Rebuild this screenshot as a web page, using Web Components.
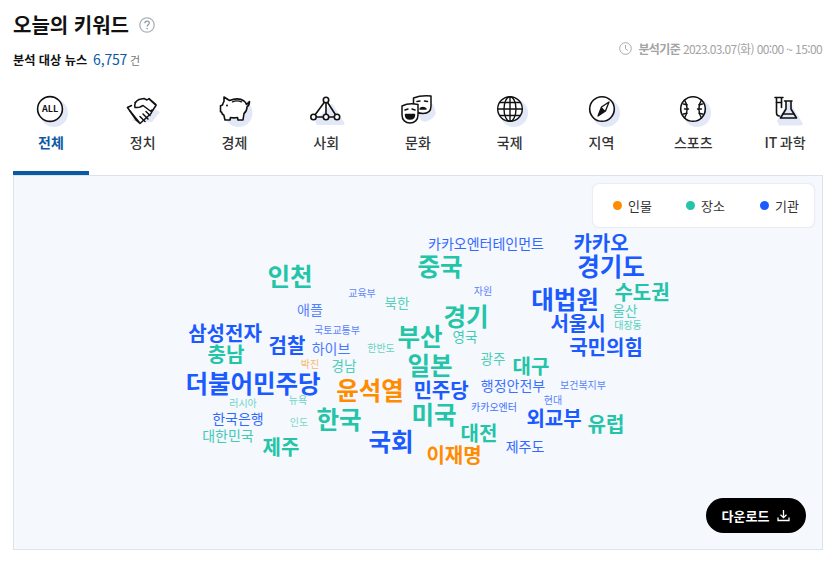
<!DOCTYPE html>
<html lang="ko"><head><meta charset="utf-8"><title>오늘의 키워드</title>
<style>
html,body{margin:0;padding:0;background:#fff;font-family:"Noto Sans CJK KR","Noto Sans",sans-serif;color:#111}
</style></head><body>
<keyword-page></keyword-page>
<template id="icons">
<svg data-k="all" viewBox="0 0 46 46"><circle cx="26" cy="23" r="14" fill="#e3e8f8"/><circle cx="22" cy="19" r="12.400" fill="#fff" stroke="#111" stroke-width="1.600"/><text x="22" y="22.200" text-anchor="middle" font-size="9" font-weight="700" fill="#111" font-family="Noto Sans CJK KR,sans-serif">ALL</text></svg>
<svg data-k="shake" viewBox="0 0 46 46"><path d="M22 12l18 10-8 10-20-1z" fill="#e3e8f8"/><g fill="#fff" stroke="#111" stroke-width="1.500" stroke-linejoin="round" stroke-linecap="round"><path d="M7.500 17.500l9 13 3.500 3 11-10 2-4-5-8-8-.5-5 1.500"/><path d="M15 17.500c-1-4 1-6.500 4-8l5-1 3 1.500 2-1.500 7 6-5 7-8-6-3 1.500c-1.500 1-3.500.5-5 .5z"/><path d="M29 9l7 6.500-3.500 5"/><path d="M7.500 17.500l4-2M10 21l9 11M20 26.500l5 5M23 24l5 5M26 21.500l4 4"/></g></svg>
<svg data-k="pig" viewBox="0 0 46 46"><circle cx="26.500" cy="23" r="14" fill="#e3e8f8"/><path d="M12 7l5.500 3.500c5-2 11-2 14.500.5 1.200 1 2 2 2.500 3.500l3-3c0 2.500-1 4.500-2.500 5.500 0 3-1 5-3 6.500l-1 6.500h-5l-.5-2.500c-2.500.5-5 .5-7 0l-.5 2.500h-5l-1.200-5c-1.500-.5-2-1.500-2.300-3l-1-.3v-6l2-.8c.5-1.500 1-2.700 1.500-3.500z" fill="#fff" stroke="#111" stroke-width="1.600" stroke-linejoin="round"/><path d="M20.500 11.800c2.500-1 6.500-1 9 0" fill="none" stroke="#111" stroke-width="1.400" stroke-linecap="round"/><circle cx="15" cy="15.500" r="1" fill="#111"/></svg>
<svg data-k="net" viewBox="0 0 46 46"><path d="M29 13.500L41 32c1 2 .5 3-1.500 3H14L12 31z" fill="#e3e8f8" /><g fill="#fff" stroke="#111" stroke-width="1.600"><path d="M23 10L10.500 27h23.500zM23 10v17" fill="none"/><circle cx="23" cy="10" r="2.700"/><circle cx="10.500" cy="27" r="2.700"/><circle cx="23" cy="27" r="2.700"/><circle cx="34" cy="27" r="2.700"/></g></svg>
<svg data-k="mask" viewBox="0 0 46 46"><path d="M26 14h12l3 9c-1 3-4 6-8 8-4 2-8 0-9-5z" fill="#e3e8f8"/><g stroke="#111" stroke-width="1.500" stroke-linecap="round" stroke-linejoin="round"><path d="M18.500 8c5-2 12-2.500 17.500-2v10c0 5-3 7.500-8 7.500-5 0-8.500-2.500-9.500-6z" fill="#fff"/><path d="M22 11.500l3-.5M29.500 11l3 .5" fill="none"/><path d="M25 19c1-2 4.500-2 6 0z" fill="#111"/><path d="M7 16c5-2.500 11-2.500 16-1.500V25c0 5-3.500 8-8 8s-8-3-8-8z" fill="#fff"/><path d="M10 20l3-1M17 19l3 1" fill="none"/><path d="M10.500 24.500h9c0 3-2 4.500-4.500 4.500s-4.500-1.500-4.500-4.500z" fill="#111"/></g></svg>
<svg data-k="globe" viewBox="0 0 46 46"><circle cx="27" cy="23" r="14" fill="#e3e8f8"/><g fill="#fff" stroke="#111" stroke-width="1.400"><circle cx="23" cy="19" r="12.300"/><g fill="none"><ellipse cx="23" cy="19" rx="6" ry="12.300"/><path d="M23 6.700v24.600M10.700 19h24.600M12.500 12.500h21M12.500 25.500h21"/></g></g></svg>
<svg data-k="comp" viewBox="0 0 46 46"><circle cx="27" cy="23" r="14" fill="#e3e8f8"/><circle cx="23" cy="19" r="12.300" fill="#fff" stroke="#111" stroke-width="1.600"/><path d="M30 12l-3.500 9-7.500 5 3.500-9z" fill="#fff" stroke="#111" stroke-width="1.300" stroke-linejoin="round"/><path d="M22.500 17l4 4-7.500 5z" fill="#111"/></svg>
<svg data-k="ball" viewBox="0 0 46 46"><circle cx="27" cy="23" r="14" fill="#e3e8f8"/><circle cx="23" cy="19" r="12.300" fill="#fff" stroke="#111" stroke-width="1.600"/><g fill="none" stroke="#111" stroke-width="1.400" stroke-linecap="round"><path d="M14.500 10c3.500 5 3.500 13 0 18M31.500 10c-3.500 5-3.500 13 0 18"/><path d="M13.500 14l3.500.8M13.500 24l3.500-.8M14.500 19h4M32.500 14l-3.500.8M32.500 24l-3.500-.8M31.500 19h-4"/></g></svg>
<svg data-k="lab" viewBox="0 0 46 46"><path d="M27 11l13.500 22c.5 1.500 0 2.500-2 2.500H17l-2-5z" fill="#e3e8f8"/><g fill="none" stroke="#111" stroke-width="1.600" stroke-linejoin="round" stroke-linecap="round"><path d="M13 7.500h8M14.500 7.500v15c0 2 1 3.500 3 3.500M19.500 7.500v10"/><path d="M14.500 12.500h5"/><path d="M22.500 11h7.500M24 11v8L18.500 28h16L29 19v-8"/><path d="M21 24h11"/></g></svg>
</template>
<script>
const FONT='"Noto Sans CJK KR","Noto Sans",sans-serif';
class HelpBadge extends HTMLElement{constructor(){super();this.attachShadow({mode:'open'}).innerHTML=`<style>:host{display:inline-flex;width:16px;height:16px}svg{width:16px;height:16px}</style><svg viewBox="0 0 16 16"><circle cx="8" cy="8" r="7.200" fill="none" stroke="#a9b2ba" stroke-width="1.300"/><path d="M5.800 6.300c.1-1.400 1-2.200 2.300-2.200 1.300 0 2.200.8 2.200 1.900 0 1.700-2.200 1.700-2.200 3.500" fill="none" stroke="#8d979f" stroke-width="1.200"/><circle cx="8.100" cy="11.600" r=".8" fill="#8d979f"/></svg>`}}
customElements.define('help-badge',HelpBadge);

class KeywordHeader extends HTMLElement{constructor(){super();this.attachShadow({mode:'open'}).innerHTML=`<style>
:host{display:block;font-family:${FONT}}
.title{display:flex;align-items:center;height:30px;gap:10px;font-size:20px;font-weight:700;color:#111;line-height:30px}
.row{display:flex;justify-content:space-between;align-items:center;height:20px;margin-top:9px}
.left{display:flex;align-items:baseline}
.lb{font-size:12.200px;font-weight:700;color:#111}
.num{font-size:14px;color:#0b5aa5;margin-left:6px;letter-spacing:-.2px}
.un{font-size:11px;color:#777;margin-left:3px}
.time{display:flex;align-items:center;gap:6px;font-size:12px;color:#a3a3a3;letter-spacing:-.62px;margin-top:-21px;margin-right:1px;white-space:nowrap}
.time b{font-weight:700;color:#a3a3a3}
svg{width:13px;height:13px;flex:none}
</style>
<div class="title"><span>오늘의 키워드</span><help-badge></help-badge></div>
<div class="row"><div class="left"><span class="lb">분석 대상 뉴스</span><span class="num">6,757</span><span class="un">건</span></div>
<div class="time"><svg viewBox="0 0 13 13"><circle cx="6.500" cy="6.500" r="5.800" fill="none" stroke="#a9a9a9"/><path d="M6.500 3v3.700l2.200 1.800" fill="none" stroke="#a9a9a9"/></svg><span><b>분석기준</b> 2023.03.07(화) 00:00 ~ 15:00</span></div></div>`}}
customElements.define('keyword-header',KeywordHeader);

class KeywordTab extends HTMLElement{constructor(){super();this.attachShadow({mode:'open'}).innerHTML=`<style>
:host{display:flex;flex-direction:column;align-items:center;width:76px;height:85px;box-sizing:border-box;font-family:${FONT}}
.ic{width:46px;height:46px;display:block}
.ic svg{width:46px;height:46px;display:block}
.lb{font-size:14px;font-weight:500;color:#333;line-height:20px;margin-top:-4px;white-space:nowrap;word-spacing:-1.500px}
:host([active]){border-bottom:4px solid #0b5aa5}
:host([active]) .lb{color:#0b5aa5;font-weight:700}
</style><div class="ic"></div><div class="lb"><slot></slot></div>`;}
connectedCallback(){const t=document.getElementById('icons').content.querySelector(`[data-k="${this.getAttribute('icon')}"]`);this.shadowRoot.querySelector('.ic').appendChild(t.cloneNode(true));}}
customElements.define('keyword-tab',KeywordTab);

class CloudWord extends HTMLElement{constructor(){super();this.attachShadow({mode:'open'}).innerHTML=`<style>
:host{position:absolute;transform:translate(-50%,-50%);white-space:nowrap;line-height:1;font-family:${FONT}}
</style><slot></slot>`}}
customElements.define('cloud-word',CloudWord);

const C={b:'#1a5aff',t:'#23c4a8',o:'#ff8c00'};
const W=[
['카카오엔터테인먼트',486,243,14,'b',400,.9],['카카오',601,243,20,'b',700],['경기도',611,266,24.500,'b',700],['중국',440,266,24.500,'t',700],['인천',290,276,24.500,'t',700],
['수도권',642,292,20,'t',700],['대법원',565,299,24.500,'b',700],['경기',466,316,24.500,'t',700],['교육부',362,293,10,'b',400,.7],['북한',397,303,13.500,'t',400,.75],['자원',483,291,10,'b',400,.75],
['애플',310,309,14,'b',400,.75],['울산',625,311,13.500,'t',400,.8],['서울시',578,323,20,'b',700],['대장동',628,325,10,'t',400,.75],['삼성전자',225,333,20,'b',700],['국토교통부',337,330,10,'b',400,.75],
['부산',420,336,24.500,'t',700],['영국',465,337,13.500,'t',400,.85],['검찰',287,345,20,'b',700],['하이브',331,348,14,'b',400,.8],['한반도',381,348,10,'t',400,.7],['국민의힘',606,347,20,'b',700],
['충남',226,354,20,'t',700],['박진',310,364,10,'o',400,.6],['일본',430,365,24.500,'t',700],['경남',344,366,13.500,'t',400,.8],['광주',493,359,13.500,'t',400,.8],['대구',531,366,20,'t',700],
['더불어민주당',253,383,24.500,'b',700],['윤석열',370,390,24.500,'o',700],['민주당',441,390,20,'b',700],['행정안전부',513,385,14,'b',400,.85],['보건복지부',583,385,10,'b',400,.75],['러시아',243,403,10,'t',400,.65],
['뉴욕',298,400,10,'t',400,.65],['현대',553,400,10,'b',400,.75],['카카오엔터',494,407,10,'b',400,.85],['한국',339,419,24.500,'t',700],['미국',434,414,24.500,'t',700],['외교부',554,418,20,'b',700],
['한국은행',238,418,14,'b',400,.9],['인도',299,422,10,'t',400,.6],['유럽',606,424,20,'t',700],['대전',479,433,20,'t',700],['대한민국',228,435,14,'t',400,.85],['국회',391,441,24.500,'b',700],
['제주',281,447,20,'t',700],['제주도',525,446,14,'b',400,.9],['이재명',454,455,20,'o',700]];

class CloudLegend extends HTMLElement{constructor(){super();this.attachShadow({mode:'open'}).innerHTML=`<style>
:host{position:absolute;top:8px;right:8px;width:221px;height:43px;box-sizing:border-box;background:#fff;border-radius:6px;box-shadow:0 0 2px rgba(120,140,170,.35);display:flex;align-items:center;padding-left:20px;font:13px/1 ${FONT};color:#333}
.i{display:flex;align-items:center;gap:6px;width:74px;flex:none}
.i:nth-child(2){width:73px}
i{width:9px;height:9px;border-radius:50%;display:block;flex:none}
</style><div class="i"><i style="background:#ff8c00"></i>인물</div><div class="i"><i style="background:#23c4a8"></i>장소</div><div class="i"><i style="background:#1a5aff"></i>기관</div>`}}
customElements.define('cloud-legend',CloudLegend);

class DownloadButton extends HTMLElement{constructor(){super();this.attachShadow({mode:'open'}).innerHTML=`<style>
:host{position:absolute;right:16px;bottom:16px;width:100px;height:35px;box-sizing:border-box;background:#000;color:#fff;border-radius:18px;display:flex;align-items:center;justify-content:center;gap:8px;font:700 13px/1 ${FONT}}
svg{width:13px;height:13px}
</style><span>다운로드</span><svg viewBox="0 0 13 13"><path d="M6.500 1v7.500M3.500 5.700l3 3 3-3M1 8.500v3h11v-3" fill="none" stroke="#fff" stroke-width="1.300"/></svg>`}}
customElements.define('download-button',DownloadButton);

class WordCloud extends HTMLElement{constructor(){super();const s=this.attachShadow({mode:'open'});s.innerHTML=`<style>
:host{display:block;position:relative;height:375px;box-sizing:border-box;background:#f5f8fd;border:1px solid #dde3ea}
</style><cloud-legend></cloud-legend><download-button></download-button>`;
W.forEach(([t,x,y,f,c,w,o])=>{const e=document.createElement('cloud-word');e.textContent=t;e.style.cssText=`left:${x-14}px;top:${y-176.500}px;font-size:${f}px;font-weight:${w};color:${C[c]};opacity:${o||1}`;s.appendChild(e)})}}
customElements.define('word-cloud',WordCloud);

class KeywordPage extends HTMLElement{constructor(){super();this.attachShadow({mode:'open'}).innerHTML=`<style>
:host{display:block;width:837px;height:564px;box-sizing:border-box;padding:10px 14px 0 13px;font-family:${FONT}}
.tabs{display:flex;justify-content:space-between;height:85px;margin-top:21px}
</style><keyword-header></keyword-header>
<div class="tabs">
<keyword-tab icon="all" active>전체</keyword-tab><keyword-tab icon="shake">정치</keyword-tab><keyword-tab icon="pig">경제</keyword-tab><keyword-tab icon="net">사회</keyword-tab><keyword-tab icon="mask">문화</keyword-tab><keyword-tab icon="globe">국제</keyword-tab><keyword-tab icon="comp">지역</keyword-tab><keyword-tab icon="ball">스포츠</keyword-tab><keyword-tab icon="lab">IT 과학</keyword-tab>
</div><word-cloud></word-cloud>`}}
customElements.define('keyword-page',KeywordPage);
</script>
</body></html>
